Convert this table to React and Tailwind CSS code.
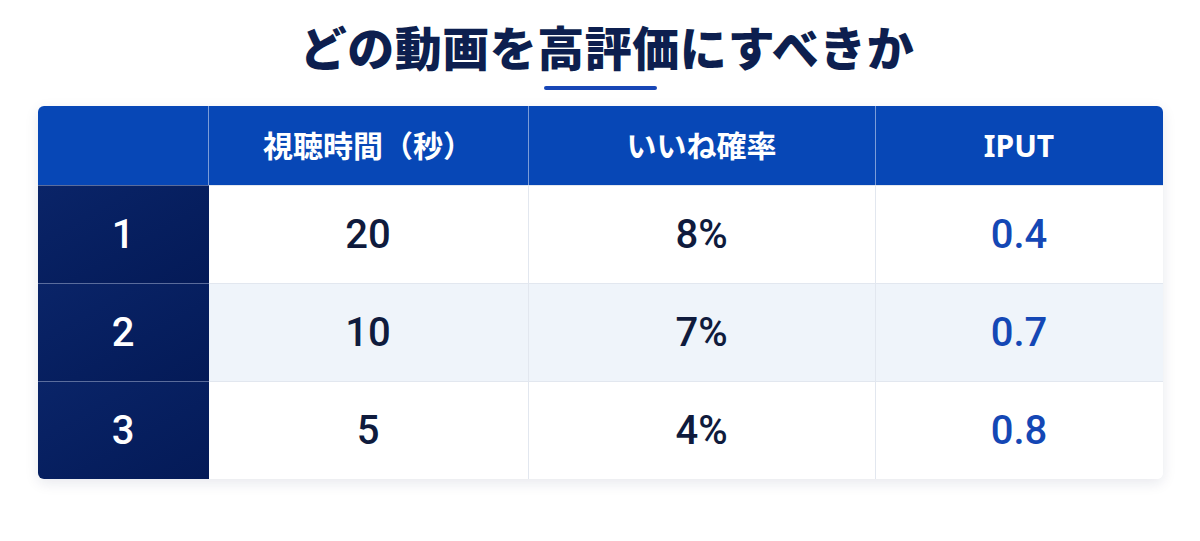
import React from "react";

const rows = [
  { n: "1", time: "20", rate: "8%", iput: "0.4", alt: false },
  { n: "2", time: "10", rate: "7%", iput: "0.7", alt: true },
  { n: "3", time: "5", rate: "4%", iput: "0.8", alt: false },
];

const num = { fontFamily: 'Roboto, "Noto Sans", sans-serif' };

export default function App() {
  return (
    <div
      className="w-[1200px] h-[541px] bg-white flex flex-col items-center"
      style={{ fontFamily: '"Noto Sans", "Noto Sans CJK JP", sans-serif' }}
    >
      {/* Title */}
      <h1 className="mt-[19px] pl-[14px] text-[47px] leading-[58px] font-black tracking-[0.5px] text-[#0d1f4f]">
        どの動画を高評価にすべきか
      </h1>
      <div className="mt-[9px] w-[113px] h-[4px] rounded-full bg-[#1746b6]" />

      {/* Table */}
      <div className="mt-[16px] w-[1125px] rounded-[6px] overflow-hidden shadow-[0_4px_14px_rgba(15,30,80,0.10)] grid grid-cols-[171px_320px_347px_1fr]">
        {/* Header */}
        <div className="h-[79px] bg-[#0747b6] border-r border-[#c9d5ee]/60" />
        {["視聴時間（秒）", "いいね確率", "IPUT"].map((h, i) => (
          <div
            key={h}
            className={
              "h-[79px] bg-[#0747b6] flex items-center justify-center text-white text-[30px] font-bold pb-[1px]" +
              (i < 2 ? " border-r border-[#c9d5ee]/60" : "")
            }
          >
            {h}
          </div>
        ))}

        {/* Body */}
        {rows.map((r) => (
          <React.Fragment key={r.n}>
            <div className="h-[98px] bg-gradient-to-br from-[#0a2468] to-[#041a57] flex items-center justify-center text-white text-[40px] font-medium border-t border-[#7f8fb8]/70" style={num}>
              {r.n}
            </div>
            <div
              style={num}
              className={
                "h-[98px] flex items-center justify-center text-[40px] font-medium text-[#0f1b3d] border-t border-r border-[#e2e7ef] " +
                (r.alt ? "bg-[#eff4fa]" : "bg-white")
              }
            >
              {r.time}
            </div>
            <div
              style={num}
              className={
                "h-[98px] flex items-center justify-center text-[40px] font-medium text-[#0f1b3d] border-t border-r border-[#e2e7ef] " +
                (r.alt ? "bg-[#eff4fa]" : "bg-white")
              }
            >
              {r.rate}
            </div>
            <div
              style={num}
              className={
                "h-[98px] flex items-center justify-center text-[40px] font-medium text-[#1447b5] border-t border-[#e2e7ef] " +
                (r.alt ? "bg-[#eff4fa]" : "bg-white")
              }
            >
              {r.iput}
            </div>
          </React.Fragment>
        ))}
      </div>
    </div>
  );
}
